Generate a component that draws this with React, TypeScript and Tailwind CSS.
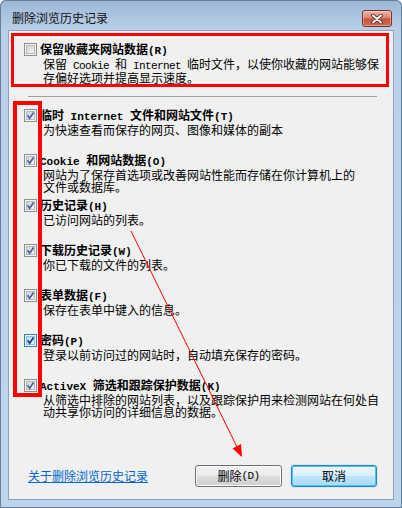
import React, { useId } from 'react';

// latin runs are narrower in the original (bitmap SimSun), so they get a mono span
const L: React.FC<{ b?: boolean; children: React.ReactNode }> = ({ b, children }) => (
  <span
    className={
      b
        ? "font-['Liberation_Mono',monospace] text-[11px] font-bold whitespace-pre"
        : "font-['Liberation_Mono',monospace] text-[11px] tracking-[-0.6px] whitespace-pre"
    }
  >
    {children}
  </span>
);

const CheckBox: React.FC<{ checked?: boolean; hot?: boolean }> = ({ checked, hot }) => {
  const id = useId();
  return (
    <svg width="13" height="13" viewBox="0 0 13 13" className="shrink-0">
      <defs>
        <linearGradient id={id} x1="0" y1="0" x2="1" y2="1">
          <stop offset="0" stopColor={hot ? '#b9dcf3' : '#ccd0d5'} />
          <stop offset="1" stopColor={hot ? '#eaf6fd' : '#f6f6f6'} />
        </linearGradient>
      </defs>
      <rect x="0.5" y="0.5" width="12" height="12" fill="#f4f4f4" stroke={hot ? '#3c7fb1' : '#8e8f8f'} />
      <rect x="2.5" y="2.5" width="8" height="8" fill={`url(#${id})`} stroke={hot ? '#79c6f9' : '#b4b8bd'} />
      {checked && (
        <path
          d="M3.6 6.3 L5.6 9.2 L9.6 3.4"
          fill="none"
          stroke={hot ? '#1b3f8f' : '#4f62a0'}
          strokeWidth="1.7"
        />
      )}
    </svg>
  );
};

interface Item {
  title: React.ReactNode;
  desc: React.ReactNode[];
  hot?: boolean;
}

const ITEMS: Item[] = [
  {
    title: <>临时<L b> Internet </L>文件和网站文件<L b>(T)</L></>,
    desc: ['为快速查看而保存的网页、图像和媒体的副本'],
  },
  {
    title: <><L b>Cookie </L>和网站数据<L b>(O)</L></>,
    desc: ['网站为了保存首选项或改善网站性能而存储在你计算机上的', '文件或数据库。'],
  },
  { title: <>历史记录<L b>(H)</L></>, desc: ['已访问网站的列表。'] },
  { title: <>下载历史记录<L b>(W)</L></>, desc: ['你已下载的文件的列表。'] },
  { title: <>表单数据<L b>(F)</L></>, desc: ['保存在表单中键入的信息。'] },
  { title: <>密码<L b>(P)</L></>, desc: ['登录以前访问过的网站时，自动填充保存的密码。'], hot: true },
  {
    title: <><L b>ActiveX </L>筛选和跟踪保护数据<L b>(K)</L></>,
    desc: ['从筛选中排除的网站列表，以及跟踪保护用来检测网站在何处自', '动共享你访问的详细信息的数据。'],
  },
];

const Option: React.FC<{ item: Item; checked?: boolean; className?: string }> = ({ item, checked, className }) => (
  <div className={`flex items-start gap-[3px] pl-[15px] ${className ?? ''}`}>
    <div className="mt-[1px]">
      <CheckBox checked={checked} hot={item.hot} />
    </div>
    <div className="flex flex-col">
      <div className="font-bold leading-[14px] whitespace-nowrap">{item.title}</div>
      {item.desc.map((d, i) => (
        <div key={i} className="ml-[3px] leading-[12px] whitespace-nowrap">
          {d}
        </div>
      ))}
    </div>
  </div>
);

export default function App() {
  return (
    <div className="relative w-[402px] h-[508px] overflow-hidden rounded-t-[6px] bg-[linear-gradient(to_bottom,#9cb7d6,#bad0e9_30px,#bfd5ec)] shadow-[inset_0_0_0_1px_#62809e] font-['Noto_Sans_CJK_SC',sans-serif] text-[12px] text-black">
      {/* title bar */}
      <div className="flex h-[30px] items-start pl-[12px] pr-[10px]">
        <div className="mt-[11px] leading-[14px] text-[#111]">删除浏览历史记录</div>
        <div className="ml-auto mt-[10px] flex h-[17px] w-[30px] items-center justify-center rounded-[3px] border border-[#7b3024] bg-[linear-gradient(to_bottom,#eab4a6,#d98672_45%,#c7543d_52%,#cf6b52)] shadow-[inset_0_0_0_1px_rgba(255,255,255,0.35)]">
          <svg width="12" height="10" viewBox="0 0 12 10">
            <path d="M2 1.5 L10 8.5 M10 1.5 L2 8.5" stroke="#4a1d16" strokeWidth="3.6" strokeLinecap="round" />
            <path d="M2 1.5 L10 8.5 M10 1.5 L2 8.5" stroke="#ffffff" strokeWidth="2" strokeLinecap="round" />
          </svg>
        </div>
      </div>

      {/* client area */}
      <div className="mx-[8px] flex h-[470px] flex-col border border-[#8da3bd] bg-[#f0f0f0]">
        <Option
          className="mt-[11px]"
          item={{
            title: <>保留收藏夹网站数据<L b>(R)</L></>,
            desc: [
              <>保留<L> Cookie </L>和<L> Internet </L>临时文件，以使你收藏的网站能够保</>,
              '存偏好选项并提高显示速度。',
            ],
          }}
        />
        <div className="ml-[19px] mr-[16px] mt-[12px] h-px bg-[#a0a0a0]" />
        <div className="mt-[11px] flex flex-col">
          {ITEMS.map((item, i) => (
            <Option key={i} item={item} checked className="h-[45px]" />
          ))}
        </div>
        <div className="mt-[42px] flex items-center pl-[19px] pr-[16px]">
          <span className="text-[#0066cc] underline leading-[14px]">关于删除浏览历史记录</span>
          <div className="ml-auto flex gap-[9px]">
            <button className="flex h-[22px] w-[87px] items-center justify-center rounded-[3px] border border-[#707070] bg-[linear-gradient(to_bottom,#f2f2f2,#ebebeb_50%,#dddddd_50%,#cfcfcf)] shadow-[inset_0_0_0_1px_#fcfcfc] leading-[14px]">
              删除<L>(D)</L>
            </button>
            <button className="flex h-[22px] w-[86px] items-center justify-center rounded-[3px] border border-[#3c7fb1] bg-[linear-gradient(to_bottom,#eaf6fd,#d9f0fc_50%,#bee6fd_50%,#a7d9f5)] shadow-[inset_0_0_0_1px_#48c4f4,0_0_2px_#7fd0f8] leading-[14px]">
              取消
            </button>
          </div>
        </div>
      </div>

      {/* red annotations */}
      <div className="pointer-events-none absolute left-[11px] top-[33px] h-[54px] w-[378px] border-[3px] border-[#ff0000]" />
      <div className="pointer-events-none absolute left-[13px] top-[101px] h-[296px] w-[29px] border-[4px] border-[#ff0000]" />
      <svg className="pointer-events-none absolute left-0 top-0" width="402" height="508">
        <line x1="131" y1="231" x2="237" y2="447" stroke="#ff0000" strokeWidth="1" />
        <polygon points="242,457 241,444 232.5,448.5" fill="#ff0000" />
      </svg>
    </div>
  );
}
